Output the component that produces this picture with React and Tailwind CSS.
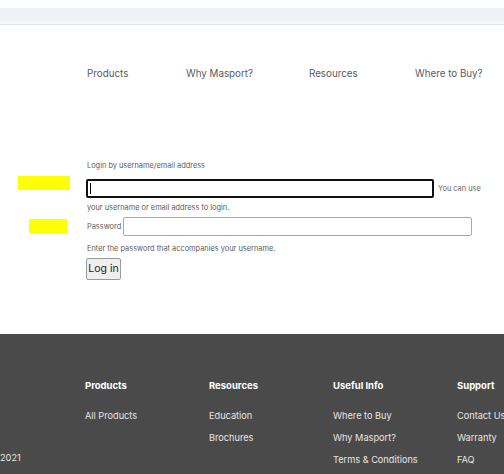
import React from "react";

const navItems = [
  { name: "Products", w: "w-[99px]" },
  { name: "Why Masport?", w: "w-[123px]" },
  { name: "Resources", w: "w-[106px]" },
  { name: "Where to Buy?", w: "w-[90px]" },
];

const footerCols = [
  { title: "Products", links: ["All Products"] },
  { title: "Resources", links: ["Education", "Brochures"] },
  { title: "Useful Info", links: ["Where to Buy", "Why Masport?", "Terms & Conditions"] },
  { title: "Support", links: ["Contact Us", "Warranty", "FAQ"] },
];

const App = () => {
  return (
    <div className="w-[504px] h-[474px] overflow-hidden bg-white flex flex-col font-['Inter',sans-serif]">
      {/* Top strip */}
      <div className="h-[8px] shrink-0" />
      <div className="h-[14px] shrink-0 bg-[#eff2f5]" />
      <div className="h-[2px] shrink-0 bg-[#f6f8fa]" />
      <div className="h-px shrink-0 bg-[#e2e5e8]" />

      {/* Nav */}
      <nav className="flex pl-[87px] pt-[42px] shrink-0 whitespace-nowrap">
        {navItems.map((item) => (
          <span key={item.name} className={`${item.w} shrink-0 text-[9.8px] leading-[14px] text-[#5a5a5a]`}>
            {item.name}
          </span>
        ))}
      </nav>

      {/* Login form */}
      <form className="pl-[86px] pt-[80px] flex flex-col shrink-0 text-[7.4px] text-[#5c5c5c] relative">
        <div className="absolute left-[18px] top-[95px] w-[52px] h-[14px] bg-[#ffff00]" />
        <div className="absolute left-[29px] top-[138px] w-[38px] h-[14px] bg-[#ffff00]" />

        <label className="pl-px leading-[10px]">Login by username/email address</label>
        <div className="flex items-center mt-[8px] whitespace-nowrap">
          <div className="w-[348px] h-[19px] border-2 border-[#111] rounded-[2px] bg-white flex items-center pl-[2px]">
            <div className="w-px h-[11px] bg-black" />
          </div>
          <span className="ml-[4px] text-[#666]">You can use</span>
        </div>
        <p className="pl-px mt-[5px] leading-[10px]">your username or email address to login.</p>
        <div className="flex items-center mt-[4px]">
          <label className="pl-px w-[37px]">Password</label>
          <div className="w-[349px] h-[19px] border border-[#aaa] rounded-[2px] bg-white" />
        </div>
        <p className="pl-px mt-[8px] leading-[10px]">Enter the password that accompanies your username.</p>
        <div className="mt-[4px]">
          <button
            type="button"
            className="h-[22px] w-[35px] text-[10.5px] text-[#222] bg-[#efefef] border border-[#999] rounded-[2px]"
          >
            Log in
          </button>
        </div>
      </form>

      {/* Footer */}
      <footer className="mt-[54px] flex-1 bg-[#4a4a4a] flex text-[9.2px] whitespace-nowrap">
        <div className="w-[85px] shrink-0 flex flex-col justify-end pb-[10px]">
          <span className="text-[#e5e5e5] leading-[12px]">2021</span>
        </div>
        {footerCols.map((col) => (
          <div key={col.title} className="w-[124px] shrink-0 pt-[46px]">
            <p className="font-bold text-[9.5px] text-white leading-[12px]">{col.title}</p>
            <ul className="mt-[18px] flex flex-col gap-[10px]">
              {col.links.map((l) => (
                <li key={l} className="text-[#e5e5e5] leading-[12px]">
                  {l}
                </li>
              ))}
            </ul>
          </div>
        ))}
      </footer>
    </div>
  );
};

export default App;
